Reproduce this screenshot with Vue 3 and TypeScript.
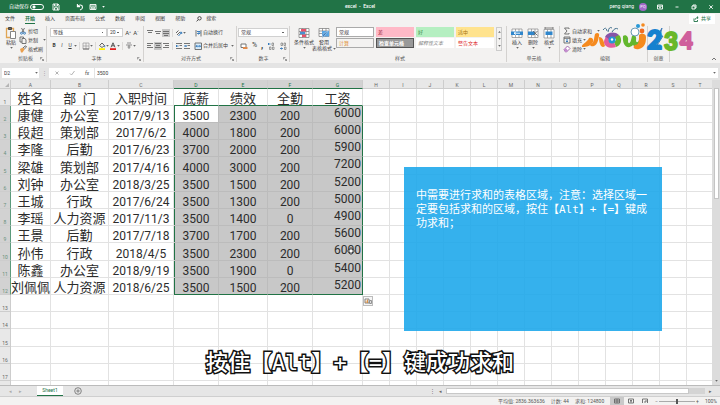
<script setup lang="ts">
import { ref } from 'vue'

interface Person {
  name: string
  dept: string
  date: string
  base: number
  perf: number
  full: number
  total: number
}

const tabs: string[] = ['文件', '开始', '插入', '页面布局', '公式', '数据', '审阅', '视图', '帮助']
const activeTab = ref('开始')
const autoSave = ref(false)
const formula = ref('3500')
const nameBox = ref('D2')
const zoom = ref(50)

const cellStyles = [
  { label: '常规', kind: 'normal' },
  { label: '差', kind: 'bad' },
  { label: '好', kind: 'good' },
  { label: '适中', kind: 'neutral' },
  { label: '计算', kind: 'calc' },
  { label: '检查单元格', kind: 'check' },
  { label: '解释性文本', kind: 'explain' },
  { label: '警告文本', kind: 'warn' },
]

const columns: string[] = 'ABCDEFGHIJKLMNOPQRST'.split('')
const extraColumns: string[] = columns.slice(7)
const emptyRows: number[] = [13, 14, 15, 16, 17, 18]

const people: Person[] = [
  { name: '康健', dept: '办公室', date: '2017/9/13', base: 3500, perf: 2300, full: 200, total: 6000 },
  { name: '段超', dept: '策划部', date: '2017/6/2', base: 4000, perf: 1800, full: 200, total: 6000 },
  { name: '李隆', dept: '后勤', date: '2017/6/23', base: 3700, perf: 2000, full: 200, total: 5900 },
  { name: '梁雄', dept: '策划部', date: '2017/4/16', base: 4000, perf: 3000, full: 200, total: 7200 },
  { name: '刘钟', dept: '办公室', date: '2018/3/25', base: 3500, perf: 1500, full: 200, total: 5200 },
  { name: '王城', dept: '行政', date: '2017/6/24', base: 3500, perf: 1300, full: 200, total: 5000 },
  { name: '李瑶', dept: '人力资源', date: '2017/11/3', base: 3500, perf: 1400, full: 0, total: 4900 },
  { name: '王景', dept: '后勤', date: '2017/7/18', base: 3700, perf: 1700, full: 200, total: 5600 },
  { name: '孙伟', dept: '行政', date: '2018/4/5', base: 3500, perf: 2300, full: 200, total: 6000 },
  { name: '陈鑫', dept: '办公室', date: '2018/9/19', base: 3500, perf: 1900, full: 0, total: 5400 },
  { name: '刘佩佩', dept: '人力资源', date: '2018/6/25', base: 3500, perf: 1500, full: 200, total: 5200 },
]

const alignTop = [
  { name: '顶端对齐', d: 'M1 1.5H7M2 3.5H6', on: false },
  { name: '垂直居中', d: 'M1 2.5H7M2 4.5H6', on: false },
  { name: '底端对齐', d: 'M1 4.5H7M2 6.5H6M1 2.5H7', on: true },
]
const alignBottom = [
  { name: '左对齐', d: 'M1 1.5H7M1 3.5H5M1 5.5H7', on: false },
  { name: '居中', d: 'M1 1.5H7M2 3.5H6M1 5.5H7', on: true },
  { name: '右对齐', d: 'M1 1.5H7M3 3.5H7M1 5.5H7', on: false },
]
</script>

<template>
  <div class="app">
    <header class="title-bar">
      <div class="quick">
        <label class="autosave">自动保存
          <input v-model="autoSave" type="checkbox" class="switch" />
        </label>
        <button aria-label="保存"><svg class="i8" viewBox="0 0 8 8"><path d="M1 1h5l1 1v5H1zM2.5 1v2h3V1M2.5 7V4.7h3V7" /></svg></button>
        <button class="undo" aria-label="撤消"><svg class="i8" viewBox="0 0 8 8"><path d="M1.4 1v2.6H4M1.6 3.4C3 1.500 6.500 1.500 6.500 4.200C6.500 6 5 6.700 4 7" stroke-width="1.100" /></svg></button>
        <button aria-label="触摸模式"><svg class="i8" viewBox="0 0 8 8"><path d="M1 1.500h6v5H1zM1 3h6M2.500 4.200h3v1.500h-3z" /></svg></button>
        <button aria-label="自定义快速访问工具栏"><svg class="arrow" viewBox="0 0 4 3"><path d="M0 0h4L2 2.500z" /></svg></button>
      </div>
      <h1>excel&nbsp; - &nbsp;Excel</h1>
      <div class="window">
        <span class="user">peng qiang</span>
        <span class="avatar">PQ</span>
        <button aria-label="功能区显示选项"><svg class="i8" viewBox="0 0 8 8"><path d="M1.500 2h5v4h-5zM1.500 3.200h5M4 5.500V4M3.300 4.500L4 3.900l.7.6" /></svg></button>
        <button aria-label="最小化"><svg class="i8" viewBox="0 0 8 8"><path d="M2.500 4h3" /></svg></button>
        <button aria-label="还原"><svg class="i8" viewBox="0 0 8 8"><path d="M2 3h3v3H2zM3 3V2h3v3H5" /></svg></button>
        <button aria-label="关闭"><svg class="i8" viewBox="0 0 8 8"><path d="M2.300 2.300l3.500 3.500M5.800 2.300L2.300 5.800" /></svg></button>
      </div>
    </header>

    <nav class="tabs">
      <button v-for="t in tabs" :key="t" :class="{ active: t === activeTab }" @click="activeTab = t">{{ t }}</button>
      <button class="search"><svg class="i6" viewBox="0 0 6 6"><circle cx="3.500" cy="2.300" r="1.700" /><path d="M2.300 3.600L.6 5.400" /></svg>搜索</button>
      <button class="share"><svg class="i6" viewBox="0 0 6 6"><path d="M1 2.500v3h3.500V4M2.300 3.600C2.500 2 3.500 1.600 5 1.600M4 .5l1.200 1.100L4 2.700" /></svg>共享</button>
    </nav>

    <section class="ribbon">
      <div class="group clipboard">
        <div class="body">
          <button class="big">
            <svg class="i12" viewBox="0 0 12 12"><path d="M5 10.500H1.500v-9h7V4" stroke="#e0a555" stroke-width="1.300" fill="none" /><path d="M3.500.5h3v2h-3z" fill="#666" /><path d="M5.500 4.500h5v7h-5z" fill="#fff" stroke="#777" /></svg>
            <span>粘贴</span><svg class="arrow" viewBox="0 0 4 3"><path d="M0 0h4L2 2.500z" /></svg>
          </button>
          <div class="stack">
            <button><svg class="i8 ink" viewBox="0 0 8 8"><path d="M2.500 1L5 5.500M5.500 1L3 5.500" /><circle cx="2.500" cy="6.200" r="1" stroke="#2b74b8" /><circle cx="5.500" cy="6.200" r="1" stroke="#2b74b8" /></svg>剪切</button>
            <button><svg class="i8 ink" viewBox="0 0 8 8"><path d="M3 6H1V1h3.500v1M3 2.500h3L7 4v3.500H3z" /></svg>复制<svg class="arrow gap" viewBox="0 0 4 3"><path d="M0 0h4L2 2.500z" /></svg></button>
            <button><svg class="i8" viewBox="0 0 8 8"><path d="M1 4l3-1.500 1.500 2L3.500 7.500H2z" fill="#eaa04e" stroke="none" /><path d="M4 3l2.500-2.200L7.500 2 5.300 4" stroke="#555" /></svg>格式刷</button>
          </div>
        </div>
        <footer>剪贴板</footer>
        <svg class="launch" viewBox="0 0 5 5"><path d="M.5 3V.5H3M2 2l2.500 2.500M4.500 2.500v2h-2" /></svg>
      </div>

      <div class="group font">
        <div class="body rows">
          <div class="line">
            <select class="face" aria-label="字体"><option>等线</option></select>
            <select class="size" aria-label="字号"><option>20</option></select>
            <button class="grow" aria-label="增大字号">A<sup>^</sup></button>
            <button class="shrink" aria-label="减小字号">A<sup>ˇ</sup></button>
          </div>
          <div class="line marks">
            <button class="b">B</button>
            <button class="it">I</button>
            <button class="u">U</button>
            <svg class="arrow" viewBox="0 0 4 3"><path d="M0 0h4L2 2.500z" /></svg>
            <i class="sep"></i>
            <button aria-label="边框"><svg class="i8 ink" viewBox="0 0 8 8"><path d="M1 1h6v6H1zM4 1v6M1 4h6" stroke="#999" stroke-width=".7" /><path d="M1 7h6" /></svg></button>
            <svg class="arrow" viewBox="0 0 4 3"><path d="M0 0h4L2 2.500z" /></svg>
            <i class="sep"></i>
            <button aria-label="填充颜色"><svg class="i8" viewBox="0 0 8 8"><path d="M1.500 3.500L4 1l2.500 2.500L4 5.500z" stroke="#555" /><path d="M6.700 3.500v1.700" stroke="#2b74b8" /><path d="M1 6.200h6v1.800H1z" fill="#fff200" stroke="none" /></svg></button>
            <svg class="arrow" viewBox="0 0 4 3"><path d="M0 0h4L2 2.500z" /></svg>
            <button aria-label="字体颜色"><svg class="i8" viewBox="0 0 8 8"><path d="M2 5.300L4 .8l2 4.500M2.800 3.800h2.400" stroke="#444" /><path d="M1 6.200h6v1.800H1z" fill="#e02020" stroke="none" /></svg></button>
            <svg class="arrow" viewBox="0 0 4 3"><path d="M0 0h4L2 2.500z" /></svg>
            <i class="sep"></i>
            <button aria-label="拼音"><svg class="i8 ink" viewBox="0 0 8 8"><path d="M2 1h4M1 3h6M4 3v4M2.500 5h3" stroke-width=".7" /></svg></button>
            <svg class="arrow" viewBox="0 0 4 3"><path d="M0 0h4L2 2.500z" /></svg>
          </div>
        </div>
        <footer>字体</footer>
        <svg class="launch" viewBox="0 0 5 5"><path d="M.5 3V.5H3M2 2l2.500 2.500M4.500 2.500v2h-2" /></svg>
      </div>

      <div class="group align">
        <div class="body rows">
          <div class="line">
            <button v-for="a in alignTop" :key="a.name" :aria-label="a.name" :class="{ on: a.on }"><svg class="i8 ink" viewBox="0 0 8 8"><path :d="a.d" /></svg></button>
            <i class="sep"></i>
            <button class="angle" aria-label="方向"><svg class="i8" viewBox="0 0 8 8"><path d="M1 4l2.500-2.500M2 6l3-3" stroke="#555" /><path d="M3.500 7l3-3.500M5 3.300h1.700V5" stroke="#2b74b8" /></svg></button>
            <svg class="arrow" viewBox="0 0 4 3"><path d="M0 0h4L2 2.500z" /></svg>
            <button class="text-tool wrap"><svg class="i8" viewBox="0 0 8 8"><path d="M2 1v6.500M7 1v6.500" stroke="#666" /><path d="M3 2.500h3v2H3.500M4.500 3.500l-1 1 1 1" stroke="#2b74b8" /></svg>自动换行</button>
          </div>
          <div class="line">
            <button v-for="a in alignBottom" :key="a.name" :aria-label="a.name" :class="{ on: a.on }"><svg class="i8 ink" viewBox="0 0 8 8"><path :d="a.d" /></svg></button>
            <i class="sep"></i>
            <button aria-label="减少缩进"><svg class="i8" viewBox="0 0 8 8"><path d="M1 1.500h6M4.500 3.500H7M1 6.500h6" stroke="#555" stroke-width=".8" /><path d="M3.500 4H1M2 3L1 4l1 1" stroke="#2b74b8" /></svg></button>
            <button aria-label="增加缩进"><svg class="i8" viewBox="0 0 8 8"><path d="M1 1.500h6M4.500 3.500H7M1 6.500h6" stroke="#555" stroke-width=".8" /><path d="M1 4h2.500M2.500 3l1 1-1 1" stroke="#2b74b8" /></svg></button>
            <button class="text-tool"><svg class="i8" viewBox="0 0 8 8"><path d="M1 1h6.500v6.500H1z" stroke="#666" fill="#d7ebfa" /><path d="M2 4.200h4.500M3 3.200l-1 1 1 1M5.500 3.200l1 1-1 1" stroke="#2b74b8" /></svg>合并后居中</button>
            <svg class="arrow" viewBox="0 0 4 3"><path d="M0 0h4L2 2.500z" /></svg>
          </div>
        </div>
        <footer>对齐方式</footer>
        <svg class="launch" viewBox="0 0 5 5"><path d="M.5 3V.5H3M2 2l2.500 2.500M4.500 2.500v2h-2" /></svg>
      </div>

      <div class="group number">
        <div class="body rows">
          <div class="line"><select class="format" aria-label="数字格式"><option>常规</option></select></div>
          <div class="line nums">
            <button aria-label="会计数字格式"><svg class="i8" viewBox="0 0 8 8"><path d="M1 2h5v3.500H1z" stroke="#666" fill="#fff" /><path d="M3 5h4.500v2H3z" fill="#e08a4a" stroke="none" /></svg></button>
            <button class="percent">%</button>
            <button class="comma">,</button>
            <button aria-label="增加小数位数"><svg class="i8" viewBox="0 0 8 8"><path d="M3.500 2H1M2 1L1 2l1 1" stroke="#2b74b8" /><path d="M5 1h1.500v2.500H5zM2.500 5H4v2.500H2.500zM5.500 5H7v2.500H5.500z" stroke="#666" stroke-width=".6" /></svg></button>
            <button aria-label="减少小数位数"><svg class="i8" viewBox="0 0 8 8"><path d="M1 6.500h2.500M2.500 5.500l1 1-1 1" stroke="#2b74b8" /><path d="M2 1h1.500v2.500H2zM5 1h1.500v2.500H5zM5.500 5H7v2.500H5.500z" stroke="#666" stroke-width=".6" /></svg></button>
          </div>
        </div>
        <footer>数字</footer>
        <svg class="launch" viewBox="0 0 5 5"><path d="M.5 3V.5H3M2 2l2.500 2.500M4.500 2.500v2h-2" /></svg>
      </div>

      <div class="group styles">
        <div class="body">
          <button class="big">
            <svg class="i12" viewBox="0 0 12 12"><path d="M1 1.500h10v9H1zM1 4.500h10M1 7.500h10M4.500 1.500v9M8 1.500v9" stroke="#777" fill="#fff" stroke-width=".7" /><path d="M3 2h5v2.500H3zM4 7.500h4V10H4z" fill="#e8516b" stroke="none" /><path d="M2 4.800h5v2.400H2z" fill="#4a90d0" stroke="none" /></svg>
            <span>条件格式</span><svg class="arrow" viewBox="0 0 4 3"><path d="M0 0h4L2 2.500z" /></svg>
          </button>
          <button class="big">
            <svg class="i12" viewBox="0 0 12 12"><path d="M1 1.500h10v8H1zM1 4h10M1 6.500h10M4.500 1.500v8M8 1.500v8" stroke="#777" fill="#fff" stroke-width=".7" /><path d="M4 4h7v5.500H4z" fill="#5aa5e2" stroke="none" /><path d="M11 2.500L7 8l-3 3.500 1-4z" fill="#2b6fb3" stroke="#fff" stroke-width=".4" /></svg>
            <span>套用</span><span class="with-arrow">表格格式<svg class="arrow" viewBox="0 0 4 3"><path d="M0 0h4L2 2.500z" /></svg></span>
          </button>
          <div class="gallery">
            <button v-for="s in cellStyles" :key="s.kind" :class="s.kind">{{ s.label }}</button>
          </div>
          <div class="spin">
            <button aria-label="上一行"><svg class="arrow" viewBox="0 0 4 3"><path d="M0 2.500h4L2 0z" /></svg></button>
            <button aria-label="下一行"><svg class="arrow" viewBox="0 0 4 3"><path d="M0 0h4L2 2.500z" /></svg></button>
            <button aria-label="其他"><svg class="arrow" viewBox="0 0 4 3"><path d="M0 0h4L2 2.500z" /></svg></button>
          </div>
        </div>
        <footer>样式</footer>
      </div>

      <div class="group cells">
        <div class="body">
          <button class="big">
            <svg class="i12" viewBox="0 0 12 12"><path d="M1 2h10v8.500H1zM4.500 2v8.500M8 2v8.500" stroke="#888" fill="#fff" stroke-width=".7" /><path d="M0 4.500h12v3.500H0z" fill="#2f86cc" stroke="none" /><path d="M3 6.200h6M5 4.800L3 6.200l2 1.400" stroke="#fff" /></svg>
            <span>插入</span><svg class="arrow" viewBox="0 0 4 3"><path d="M0 0h4L2 2.500z" /></svg>
          </button>
          <button class="big">
            <svg class="i12" viewBox="0 0 12 12"><path d="M1 2h10v8.500H1zM4.500 2v8.500M8 2v8.500" stroke="#888" fill="#fff" stroke-width=".7" /><path d="M1 4.500h7v3.500H1z" fill="#2f86cc" stroke="none" /><path d="M6 4l4.500 4.500M10.500 4L6 8.500" stroke="#666" /></svg>
            <span>删除</span><svg class="arrow" viewBox="0 0 4 3"><path d="M0 0h4L2 2.500z" /></svg>
          </button>
          <button class="big">
            <svg class="i12" viewBox="0 0 12 12"><path d="M1 2.500h10v8.500H1zM4.500 2.500V11M8 2.500V11" stroke="#888" fill="#fff" stroke-width=".7" /><path d="M2 1h8M2 0v2M10 0v2" stroke="#666" stroke-width=".8" /><path d="M2.500 4.500h7v3.500h-7z" fill="#2f86cc" stroke="none" /></svg>
            <span>格式</span><svg class="arrow" viewBox="0 0 4 3"><path d="M0 0h4L2 2.500z" /></svg>
          </button>
        </div>
        <footer>单元格</footer>
      </div>

      <div class="group edit">
        <div class="body">
          <div class="stack">
            <button><svg class="i8 ink" viewBox="0 0 8 8"><path d="M6 2V1H1.500L4 4 1.500 7H6V6" /></svg>自动求和<svg class="arrow gap" viewBox="0 0 4 3"><path d="M0 0h4L2 2.500z" /></svg></button>
            <button><svg class="i8" viewBox="0 0 8 8"><path d="M1 1h6v6H1zM1 2.300h6" stroke="#666" /><path d="M4 3v3M3 5l1 1 1-1" stroke="#2b74b8" /></svg>填充<svg class="arrow" viewBox="0 0 4 3"><path d="M0 0h4L2 2.500z" /></svg></button>
            <button><svg class="i8" viewBox="0 0 8 8"><path d="M1 4.700L4.500 1 7 3.500 3.500 7H2.500z" stroke="#9a5ba5" fill="#fff" /><path d="M1 4.700l1.700-1.700L5 5.500 3.500 7H2.500z" fill="#c48bd0" stroke="none" /></svg>清除<svg class="arrow" viewBox="0 0 4 3"><path d="M0 0h4L2 2.500z" /></svg></button>
          </div>
        </div>
        <footer>编辑</footer>
      </div>

      <div class="group ideas">
        <div class="body">
          <button class="big" aria-label="创意"><svg class="bolt" viewBox="0 0 12 24"><path d="M9 1L3 11h3l-3 9 7-11H7z" fill="#7fb4e6" stroke="#2b6fb3" stroke-width=".8" /></svg></button>
        </div>
        <footer>创意</footer>
      </div>
      <button class="collapse" aria-label="折叠功能区"><svg class="i6 ink" viewBox="0 0 6 6"><path d="M1 4l2-2 2 2" /></svg></button>

      <!-- Channel watermark floating over the ribbon -->
      <svg class="mark" viewBox="0 0 114 32" role="img" aria-label="logo">
        <path d="M14 11c2-2 5-1 4 2-1 4-1 8-5 10-3 1-5-1-3-2 3-1 3-6 4-10z" fill="#f58a1f" />
        <path d="M8 15c3-1 5 1 4 4-2 4-6 5-11 5-1-3 5-4 7-9zM18 14c4 0 5 5 6 9-3 3-6-1-6-9z" fill="#f58a1f" />
        <path d="M24 14c2-5 10-6 14-2l-3 4c-3-2-6-1-8 1z" fill="#8755a8" />
        <path d="M38 12c4 4 2 11-3 12l-2-5c2-1 3-3 1-5z" fill="#69b52d" />
        <path d="M35 24c-5 2-12 0-12-5 0-2 1-4 2-5l4 3c-1 2 1 3 4 2z" fill="#e35d9e" />
        <circle cx="31" cy="17" r="3.500" fill="#2499d5" /><circle cx="31" cy="16.500" r="1.200" fill="#fff" />
        <path d="M22 7q3-4 4 1M27 9q1-6 4-4M31 9q3-5 6-3" fill="none" stroke="#43718e" stroke-width="1" />
        <path d="M42 13c3-2 6 1 5 5 0 3 2 3 3-1l1-4c2-2 5 0 4 4 0 3 2 3 3 0v-4l3 1c1 6-1 10-5 10-2 0-3-1-4-2-5 5-11 1-10-9z" fill="#63b72e" />
        <path d="M58 12c2-2 7-2 7 2 0 6-1 10-7 12-5 1-7-2-4-4 4 0 4-4 4-10z" fill="#f58a1f" />
        <circle cx="54" cy="9" r="4" fill="#fff" stroke="#5b8fae" stroke-width=".9" />
        <circle cx="57" cy="3" r="2" fill="#2899d7" /><circle cx="62" cy="2" r="1.800" fill="#f58a1f" /><circle cx="61" cy="8" r="2.400" fill="#f26c21" />
        <text x="66" y="26" class="two">2</text>
        <text x="83" y="27" class="three">3</text>
        <text x="99" y="26" class="four">4</text>
      </svg>
    </section>

    <section class="formula-bar">
      <input v-model="nameBox" class="name-box" aria-label="名称框" />
      <svg class="arrow box-arrow" viewBox="0 0 4 3"><path d="M0 0h4L2 2.500z" /></svg>
      <span class="dots">⋮</span>
      <div class="checks">
        <button class="muted" aria-label="取消"><svg class="i6" viewBox="0 0 6 6"><path d="M1.500 1.500l3 3M4.500 1.500l-3 3" /></svg></button>
        <button class="muted" aria-label="输入"><svg class="i6" viewBox="0 0 6 6"><path d="M1 3.500L2.500 5 5.500 1" /></svg></button>
        <button class="fx">fx</button>
      </div>
      <input v-model="formula" class="formula" aria-label="编辑栏" />
      <button class="expand" aria-label="展开编辑栏"><svg class="arrow" viewBox="0 0 4 3"><path d="M0 0h4L2 2.500z" /></svg></button>
    </section>

    <main class="work">
      <div class="sheet">
        <table>
          <colgroup>
            <col class="c-num" /><col class="c-a" /><col class="c-b" /><col class="c-c" /><col class="c-d" /><col class="c-e" /><col class="c-d" /><col class="c-g" />
            <col v-for="c in extraColumns" :key="c" class="c-rest" />
          </colgroup>
          <thead>
            <tr>
              <th class="corner"><svg class="i6" viewBox="0 0 6 6"><path d="M5 1v4H1z" /></svg></th>
              <th v-for="(c, i) in columns" :key="c" scope="col" :class="{ picked: i > 2 && i < 7 }">{{ c }}</th>
            </tr>
          </thead>
          <tbody>
            <tr class="heads">
              <th scope="row">1</th>
              <td>姓名</td><td>部&nbsp;&nbsp;门</td><td>入职时间</td><td>底薪</td><td>绩效</td><td>全勤</td><td>工资</td>
              <td v-for="c in extraColumns" :key="c"></td>
            </tr>
            <tr v-for="(p, i) in people" :key="p.name" :class="{ last: i === people.length - 1 }">
              <th scope="row" class="picked">{{ i + 2 }}</th>
              <td>{{ p.name }}</td>
              <td>{{ p.dept }}</td>
              <td class="n">{{ p.date }}</td>
              <td class="n sel left" :class="{ current: i === 0 }">{{ p.base }}</td>
              <td class="n sel">{{ p.perf }}</td>
              <td class="n sel">{{ p.full }}</td>
              <td class="n sel total">{{ p.total }}</td>
              <td v-for="c in extraColumns" :key="c"></td>
            </tr>
            <tr v-for="r in emptyRows" :key="r">
              <th scope="row">{{ r < 18 ? r : '' }}</th>
              <td v-for="c in columns" :key="c"></td>
            </tr>
          </tbody>
        </table>

        <button class="quick-analysis" aria-label="快速分析"><svg class="i8" viewBox="0 0 8 8"><path d="M1 2h4v4H1z" stroke="#777" fill="#fff" /><path d="M2 6V3.500M3.500 6V2.500" stroke="#d98a3a" /><path d="M5.500 3.500h2v3h-2z" stroke="#888" fill="#ddd" /></svg></button>
        <svg class="cursor" viewBox="0 0 8 8"><path d="M3 1h2v2h2v2H5v2H3V5H1V3h2z" /></svg>

        <aside class="note">中需要进行求和的表格区域，注意：选择区域一定要包括求和的区域，按住【Alt】+【=】键成功求和；</aside>
      </div>
      <div class="v-scroll"><span class="thumb"></span><svg class="arrow" viewBox="0 0 4 3"><path d="M0 0h4L2 2.500z" /></svg></div>
      <p class="caption">按住【Alt】+【=】键成功求和</p>
    </main>

    <section class="sheet-bar">
      <div class="nav-arrows"><span>◂</span><span>▸</span></div>
      <button class="sheet-tab">Sheet1</button>
      <button class="add" aria-label="新工作表"><svg class="i8" viewBox="0 0 8 8"><circle cx="4" cy="4" r="3.300" /><path d="M4 2.300v3.400M2.300 4h3.400" /></svg></button>
      <div class="h-scroll"><span>⋮</span><span class="tri">◂</span><div class="track"><div class="bar"></div></div><span class="tri">▸</span></div>
    </section>

    <footer class="status">
      <span>平均值: 2836.363636</span><span>计数: 44</span><span>求和: 124800</span>
      <div class="views">
        <button class="on" aria-label="普通"><svg class="i6 ink" viewBox="0 0 6 6"><path d="M.5 1h5v4h-5zM.5 3h5M3 1v4" /></svg></button>
        <button aria-label="页面布局"><svg class="i6 ink" viewBox="0 0 6 6"><path d="M.5 1h5v4h-5zM2 2.500h2M2 3.800h2" /></svg></button>
        <button aria-label="分页预览"><svg class="i6 ink" viewBox="0 0 6 6"><path d="M.5 5V1h5v4M3 5V3h2.500" /></svg></button>
      </div>
      <div class="zoomer"><span>−</span><input v-model="zoom" type="range" min="0" max="100" aria-label="缩放" /><span>+</span></div>
      <span class="pct">100%</span>
    </footer>
  </div>
</template>

<style>
html,
body {
  margin: 0;
}
</style>

<style scoped>
.app {
  display: flex;
  flex-direction: column;
  height: 100vh;
  overflow: hidden;
  background: #f3f2f1;
  color: #3c3c3c;
  font: 5px/7px Roboto, "Noto Sans CJK SC", sans-serif;
}
* {
  box-sizing: border-box;
}
button,
input,
select {
  margin: 0;
  padding: 0;
  border: 0;
  border-radius: 0;
  background: none;
  color: inherit;
  font: inherit;
  outline: 0;
}
button {
  display: flex;
  align-items: center;
  justify-content: center;
  white-space: nowrap;
}
svg {
  display: block;
  flex: none;
  fill: none;
  stroke: currentColor;
  stroke-width: 0.9;
}
.i6 { width: 6px; height: 6px; }
.i8 { width: 8px; height: 8px; }
.i12 { width: 12px; height: 12px; }
.ink { color: #666; }
.arrow {
  width: 3px;
  height: 2px;
  fill: #666;
  stroke: none;
}
.arrow.gap { margin-left: 4px; }

/* Title bar */
.title-bar {
  flex: none;
  display: grid;
  grid-template-columns: 1fr auto 1fr;
  align-items: center;
  height: 13px;
  background: #217346;
  color: #fff;
}
.title-bar .arrow { fill: #fff; }
.quick {
  display: flex;
  align-items: center;
  gap: 5px;
  padding-left: 9px;
}
.autosave {
  display: flex;
  align-items: center;
  gap: 1px;
  margin-right: 3px;
}
.switch {
  appearance: none;
  width: 14px;
  height: 6px;
  border: 1px solid #fff;
  border-radius: 3px;
  background: radial-gradient(circle at 3px 2px, #fff 1px, transparent 2px);
}
.undo { margin-left: 11px; }
h1 {
  margin: 0;
  font-size: 5px;
  font-weight: 500;
}
.window {
  display: flex;
  align-items: center;
  justify-content: flex-end;
  gap: 9px;
  padding-right: 5px;
}
.user { margin-right: -4px; }
.avatar {
  width: 8px;
  height: 8px;
  border-radius: 50%;
  background: #a069c8;
  font-size: 4px;
  line-height: 8px;
  text-align: center;
}

/* Tabs */
.tabs {
  flex: none;
  display: flex;
  align-items: center;
  gap: 10px;
  height: 12px;
  padding: 0 5px;
}
.tabs button { height: 10px; border-bottom: 1px solid transparent; }
.tabs .active {
  border-color: #217346;
  color: #217346;
  font-weight: 700;
}
.tabs .search { gap: 4px; margin-left: 1px; }
.tabs .share {
  gap: 2px;
  margin-left: auto;
  padding: 0 4px;
  background: #fff;
  color: #217346;
}

/* Ribbon */
.ribbon {
  position: relative;
  flex: none;
  display: flex;
  height: 38px;
  padding: 1px 0;
}
.group {
  position: relative;
  flex: none;
  display: flex;
  flex-direction: column;
  border-right: 1px solid #d4d2d0;
}
.group .body {
  display: flex;
  flex: 1;
  min-height: 0;
  padding-top: 1px;
}
.group footer {
  height: 7px;
  color: #555;
  text-align: center;
}
.launch {
  position: absolute;
  right: 2px;
  bottom: 1px;
  width: 4px;
  height: 4px;
  color: #777;
}
.big {
  flex-direction: column;
  justify-content: flex-start;
  line-height: 6px;
}
.big .arrow { margin-top: 2px; }
.with-arrow {
  display: flex;
  align-items: center;
  gap: 1px;
}
.stack {
  display: flex;
  flex-direction: column;
  gap: 1px;
}
.stack button {
  gap: 1px;
  height: 8px;
  justify-content: flex-start;
}
.rows {
  flex-direction: column;
  gap: 2px;
}
.line {
  display: flex;
  align-items: center;
  height: 11px;
}
.line .sep {
  width: 1px;
  height: 8px;
  margin: 0 2px;
  background: #dcdad8;
}
.line .on { background: #c6c6c6; }
select {
  appearance: none;
  height: 9px;
  padding: 0 2px;
  border: 1px solid #d0d0d0;
  background: #fff conic-gradient(from 315deg at 50% 100%, #666 90deg, transparent 0) no-repeat right 3px center / 2px 1px;
}
.clipboard { width: 47px; padding-left: 5px; }
.clipboard .body { gap: 2px; }
.font { width: 97px; padding-left: 3px; }
.face { width: 57px; }
.size { width: 16px; }
.grow,
.shrink {
  width: 8px;
  font-size: 6px;
}
.grow { margin-left: 1px; }
sup { font-size: 4px; line-height: 0; }
.marks .b { width: 8px; font-weight: 700; }
.marks .it { width: 8px; font-style: italic; }
.marks .u { width: 8px; text-decoration: underline; }
.align { width: 93px; padding-left: 2px; }
.text-tool { margin-left: 3px; gap: 1px; }
.align .text-tool + .arrow { margin-left: 3px; }
.wrap { margin-left: 8px; }
.number { width: 53px; padding-left: 1px; }
.format { width: 50px; }
.nums { justify-content: space-between; padding: 0 2px; }
.percent { font-size: 7px; }
.comma { font-size: 9px; font-weight: 700; }
.styles { width: 217px; padding-left: 4px; }
.styles .big { width: 20px; }
.gallery {
  display: grid;
  grid-template-columns: repeat(4, 38px);
  grid-auto-rows: 10px;
  gap: 1px 2px;
  padding-left: 2px;
}
.gallery button {
  justify-content: flex-start;
  padding-left: 2px;
}
.gallery .normal { border: 1px solid #aaa; background: #fff; }
.gallery .bad { background: #ffb9c7; color: #a02a3a; }
.gallery .good { background: #b5efc1; color: #3b8a4b; }
.gallery .neutral { background: #ffe38e; color: #a87514; }
.gallery .calc { border: 1px solid #aaa; color: #e08a2a; }
.gallery .check { border: 1px solid #555; background: #999; color: #fff; font-weight: 700; }
.gallery .explain { background: #fff; color: #888; font-style: italic; }
.gallery .warn { background: #fff; color: #e02a2a; }
.spin {
  display: flex;
  flex-direction: column;
  width: 6px;
  height: 24px;
  margin-left: 2px;
  border: 1px solid #ccc;
}
.spin button { flex: 1; }
.cells { width: 53px; padding-left: 2px; }
.cells .big { width: 16px; }
.edit { width: 88px; padding-left: 3px; }
.ideas { width: 22px; }
.ideas .body { justify-content: center; }
.bolt { width: 12px; height: 24px; }
.collapse {
  align-self: flex-end;
  margin-left: auto;
  margin-right: 3px;
}
.mark {
  position: absolute;
  top: -2px;
  right: 25px;
  width: 114px;
  height: 32px;
  stroke: none;
}
.mark text {
  font: 900 26px Lato, "Open Sans", sans-serif;
  stroke-width: 2;
  stroke-linejoin: round;
}
.mark .two { fill: #1681cf; stroke: #1681cf; }
.mark .three { font-size: 24px; fill: #69b82b; stroke: #69b82b; }
.mark .four { font-size: 22px; fill: #cf5f9c; stroke: #cf5f9c; }

/* Formula bar */
.formula-bar {
  flex: none;
  display: flex;
  height: 17px;
  padding: 5px 2px 2px;
  background: #e4e4e4;
}
.name-box {
  width: 32px;
  padding-left: 2px;
  background: #fff;
}
.box-arrow {
  width: 5px;
  height: 10px;
  padding: 4px 1px;
  background: #fff;
}
.dots { width: 10px; text-align: center; color: #999; line-height: 10px; }
.checks {
  display: flex;
  justify-content: space-around;
  width: 45px;
  background: #fff;
}
.muted { color: #aaa; }
.fx { font-style: italic; }
.formula {
  flex: 1;
  min-width: 0;
  margin-left: 1px;
  padding-left: 2px;
  background: #fff;
}
.expand { width: 8px; background: #fff; }

/* Worksheet */
.work {
  position: relative;
  flex: 1;
  display: flex;
  min-height: 0;
  border-bottom: 1px solid #bbb;
}
.sheet {
  position: relative;
  flex: 1;
  min-width: 0;
  overflow: hidden;
  background: #fff;
}
table {
  width: 100%;
  table-layout: fixed;
  border-collapse: separate;
  border-spacing: 0;
  font-size: 13px;
  line-height: 12px;
  color: #2c2c2c;
}
.c-num { width: 11px; }
.c-a { width: 40px; }
.c-b { width: 58px; }
.c-c { width: 65px; }
.c-d { width: 45px; }
.c-e { width: 49px; }
.c-g { width: 50px; }
.c-rest { width: 27px; }
th,
td {
  padding: 0;
  border: solid #e2e2e2;
  border-width: 0 1px 1px 0;
  white-space: nowrap;
  text-align: center;
  vertical-align: bottom;
}
th {
  background: #e8e8e8;
  border-color: #cdcdcd;
  color: #666;
  font-size: 5px;
  font-weight: 400;
  line-height: 6px;
}
thead th { height: 9px; }
.corner svg { margin-left: auto; fill: #b5b5b5; stroke: none; }
thead .picked { background: #d2d2d2; border-bottom-color: #217346; color: #217346; }
tbody tr { height: 17px; }
tbody tr:nth-child(5n) { height: 18px; }
tbody .picked { background: #d2d2d2; border-right-color: #5b9a7b; color: #68907b; }
.n { font-size: 12px; }
.sel { background: #c8c8c8; border-color: #bcbcbc; }
.current { background: #fff; }
.left { box-shadow: inset 1px 0 #217346; }
.total {
  padding-right: 1px;
  border-right-color: #217346;
  text-align: right;
  vertical-align: top;
  line-height: 15px;
}
.heads td:nth-child(n + 5):nth-child(-n + 8) { border-bottom-color: #217346; }
.last .sel { border-bottom-color: #217346; }
.quick-analysis {
  position: absolute;
  left: 363px;
  top: 216px;
  width: 10px;
  height: 10px;
  border: 1px solid #bbb;
  background: #f5f5f5;
}
.cursor {
  position: absolute;
  left: 347px;
  top: 167px;
  width: 8px;
  height: 8px;
  color: #333;
  fill: #fff;
}
.note {
  position: absolute;
  left: 404px;
  top: 87px;
  width: 258px;
  height: 164px;
  padding: 22px 13px 0 12px;
  background: rgb(31 168 235 / 90%);
  color: #fff;
  font: 11px/14px "DejaVu Sans Mono", "Noto Sans CJK SC", monospace;
}
.caption {
  position: absolute;
  left: 0;
  right: 0;
  bottom: 7px;
  margin: 0;
  color: #fff;
  font: 500 22px/30px "DejaVu Sans Mono", "Noto Sans CJK SC", monospace;
  text-align: center;
  white-space: nowrap;
  -webkit-text-stroke: 3px #111;
  paint-order: stroke fill;
}
.v-scroll {
  display: flex;
  flex-direction: column;
  justify-content: space-between;
  align-items: center;
  width: 8px;
  padding: 8px 1px 3px;
  background: #dcdcdc;
}
.v-scroll .thumb {
  width: 5px;
  height: 111px;
  border: 1px solid #c4c4c4;
  background: #fff;
}

/* Sheet tabs */
.sheet-bar {
  flex: none;
  display: flex;
  align-items: center;
  height: 11px;
  border-bottom: 1px solid #cfcfcf;
  background: #e6e6e6;
}
.nav-arrows {
  display: flex;
  justify-content: center;
  gap: 7px;
  width: 37px;
  padding-right: 6px;
  color: #aaa;
}
.sheet-tab {
  width: 26px;
  height: 10px;
  border-bottom: 1px solid #217346;
  background: #fff;
  color: #217346;
}
.add { margin-left: 11px; color: #777; }
.h-scroll {
  flex: 1;
  display: flex;
  align-items: center;
  gap: 4px;
  max-width: 290px;
  margin-left: auto;
  padding-right: 8px;
  color: #666;
}
.track { flex: 1; height: 6px; background: #d4d4d4; }
.bar { width: 94%; height: 6px; border: 1px solid #c8c8c8; background: #fff; }

/* Status bar */
.status {
  flex: none;
  display: flex;
  align-items: center;
  justify-content: flex-end;
  gap: 6px;
  height: 8px;
  padding-right: 3px;
  color: #555;
}
.views { display: flex; margin-right: -3px; }
.views button { width: 14px; height: 8px; }
.views .on { background: #c9c9c9; }
.zoomer { display: flex; align-items: center; gap: 1px; }
.zoomer input {
  appearance: none;
  width: 36px;
  height: 6px;
  background: linear-gradient(#aaa, #aaa) no-repeat center / 100% 1px;
}
.zoomer input::-webkit-slider-thumb {
  appearance: none;
  width: 2px;
  height: 5px;
  background: #555;
}
</style>
